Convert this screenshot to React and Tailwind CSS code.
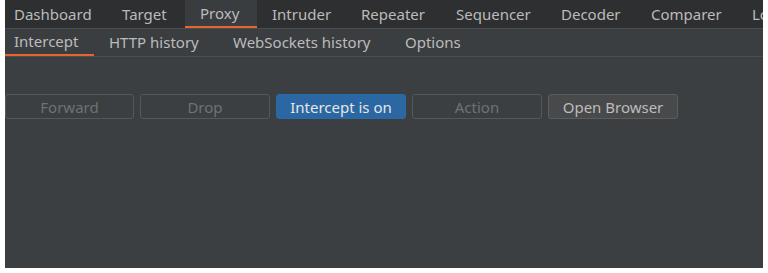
import React from 'react';

const topTabs = [
    { label: "Dashboard", w: "w-[102px]", pl: "pl-[9px]" },
    { label: "Target", w: "w-[78px]", pl: "pl-[15px]" },
    { label: "Proxy", w: "w-[72px]", pl: "pl-[15px]", active: true },
    { label: "Intruder", w: "w-[89px]", pl: "pl-[15px]" },
    { label: "Repeater", w: "w-[95px]", pl: "pl-[15px]" },
    { label: "Sequencer", w: "w-[105px]", pl: "pl-[15px]" },
    { label: "Decoder", w: "w-[90px]", pl: "pl-[15px]" },
    { label: "Comparer", w: "w-[101px]", pl: "pl-[15px]" },
    { label: "Logger", w: "w-[80px]", pl: "pl-[15px]" },
];

const subTabs = [
    { label: "Intercept", w: "w-[89px]", pl: "pl-[9px]", active: true },
    { label: "HTTP history", w: "w-[124px]", pl: "pl-[15px]" },
    { label: "WebSockets history", w: "w-[172px]", pl: "pl-[15px]" },
    { label: "Options", w: "w-[90px]", pl: "pl-[15px]" },
];

const Btn = ({ children, kind, w = "w-[130px]" }) => {
    const styles = {
        off: "border-[#55585a] bg-[#3c3f41] text-[#6f7173]",
        on: "border-[#2c6aa5] bg-[#2b67a2] text-[#e6e6e6]",
        normal: "border-[#5a5d5f] bg-[#47494b] text-[#bcbcbc]",
    };
    return (
        <div className={w + " h-[25px] rounded-[3px] border flex items-center justify-center shrink-0 pt-px " + styles[kind]}>
            {children}
        </div>
    );
};

const App = () => {
    return (
        <div className="w-[768px] h-[273px] bg-white px-[5px] pb-[5px] overflow-hidden" style={{ fontFamily: '"Noto Sans", "Open Sans", sans-serif' }}>
            <div className="w-[758px] h-[268px] bg-[#3c3f41] flex flex-col text-[15px] text-[#bbbbbb] overflow-hidden">
                <div className="h-[28px] bg-[#2d2f31] flex shrink-0 whitespace-nowrap overflow-hidden">
                    {topTabs.map((t) => (
                        <div
                            key={t.label}
                            className={"h-full shrink-0 flex items-center " + t.w + " " + t.pl + (t.active ? " bg-[#3a3d40] border-b-[2px] border-[#e8642c]" : "")}
                        >
                            {t.label}
                        </div>
                    ))}
                </div>
                <div className="h-[29px] bg-[#3b3e41] border-t border-b border-[#4b4e51] flex shrink-0 whitespace-nowrap">
                    {subTabs.map((t) => (
                        <div
                            key={t.label}
                            className={"h-full shrink-0 flex items-center " + t.w + " " + t.pl + (t.active ? " border-b-[2px] border-[#e8642c]" : "")}
                        >
                            {t.label}
                        </div>
                    ))}
                </div>
                <div className="flex gap-[6px] mt-[37px] leading-none">
                    <Btn kind="off" w="w-[129px]">Forward</Btn>
                    <Btn kind="off">Drop</Btn>
                    <Btn kind="on">Intercept is on</Btn>
                    <Btn kind="off">Action</Btn>
                    <Btn kind="normal">Open Browser</Btn>
                </div>
            </div>
        </div>
    );
};

export default App;
